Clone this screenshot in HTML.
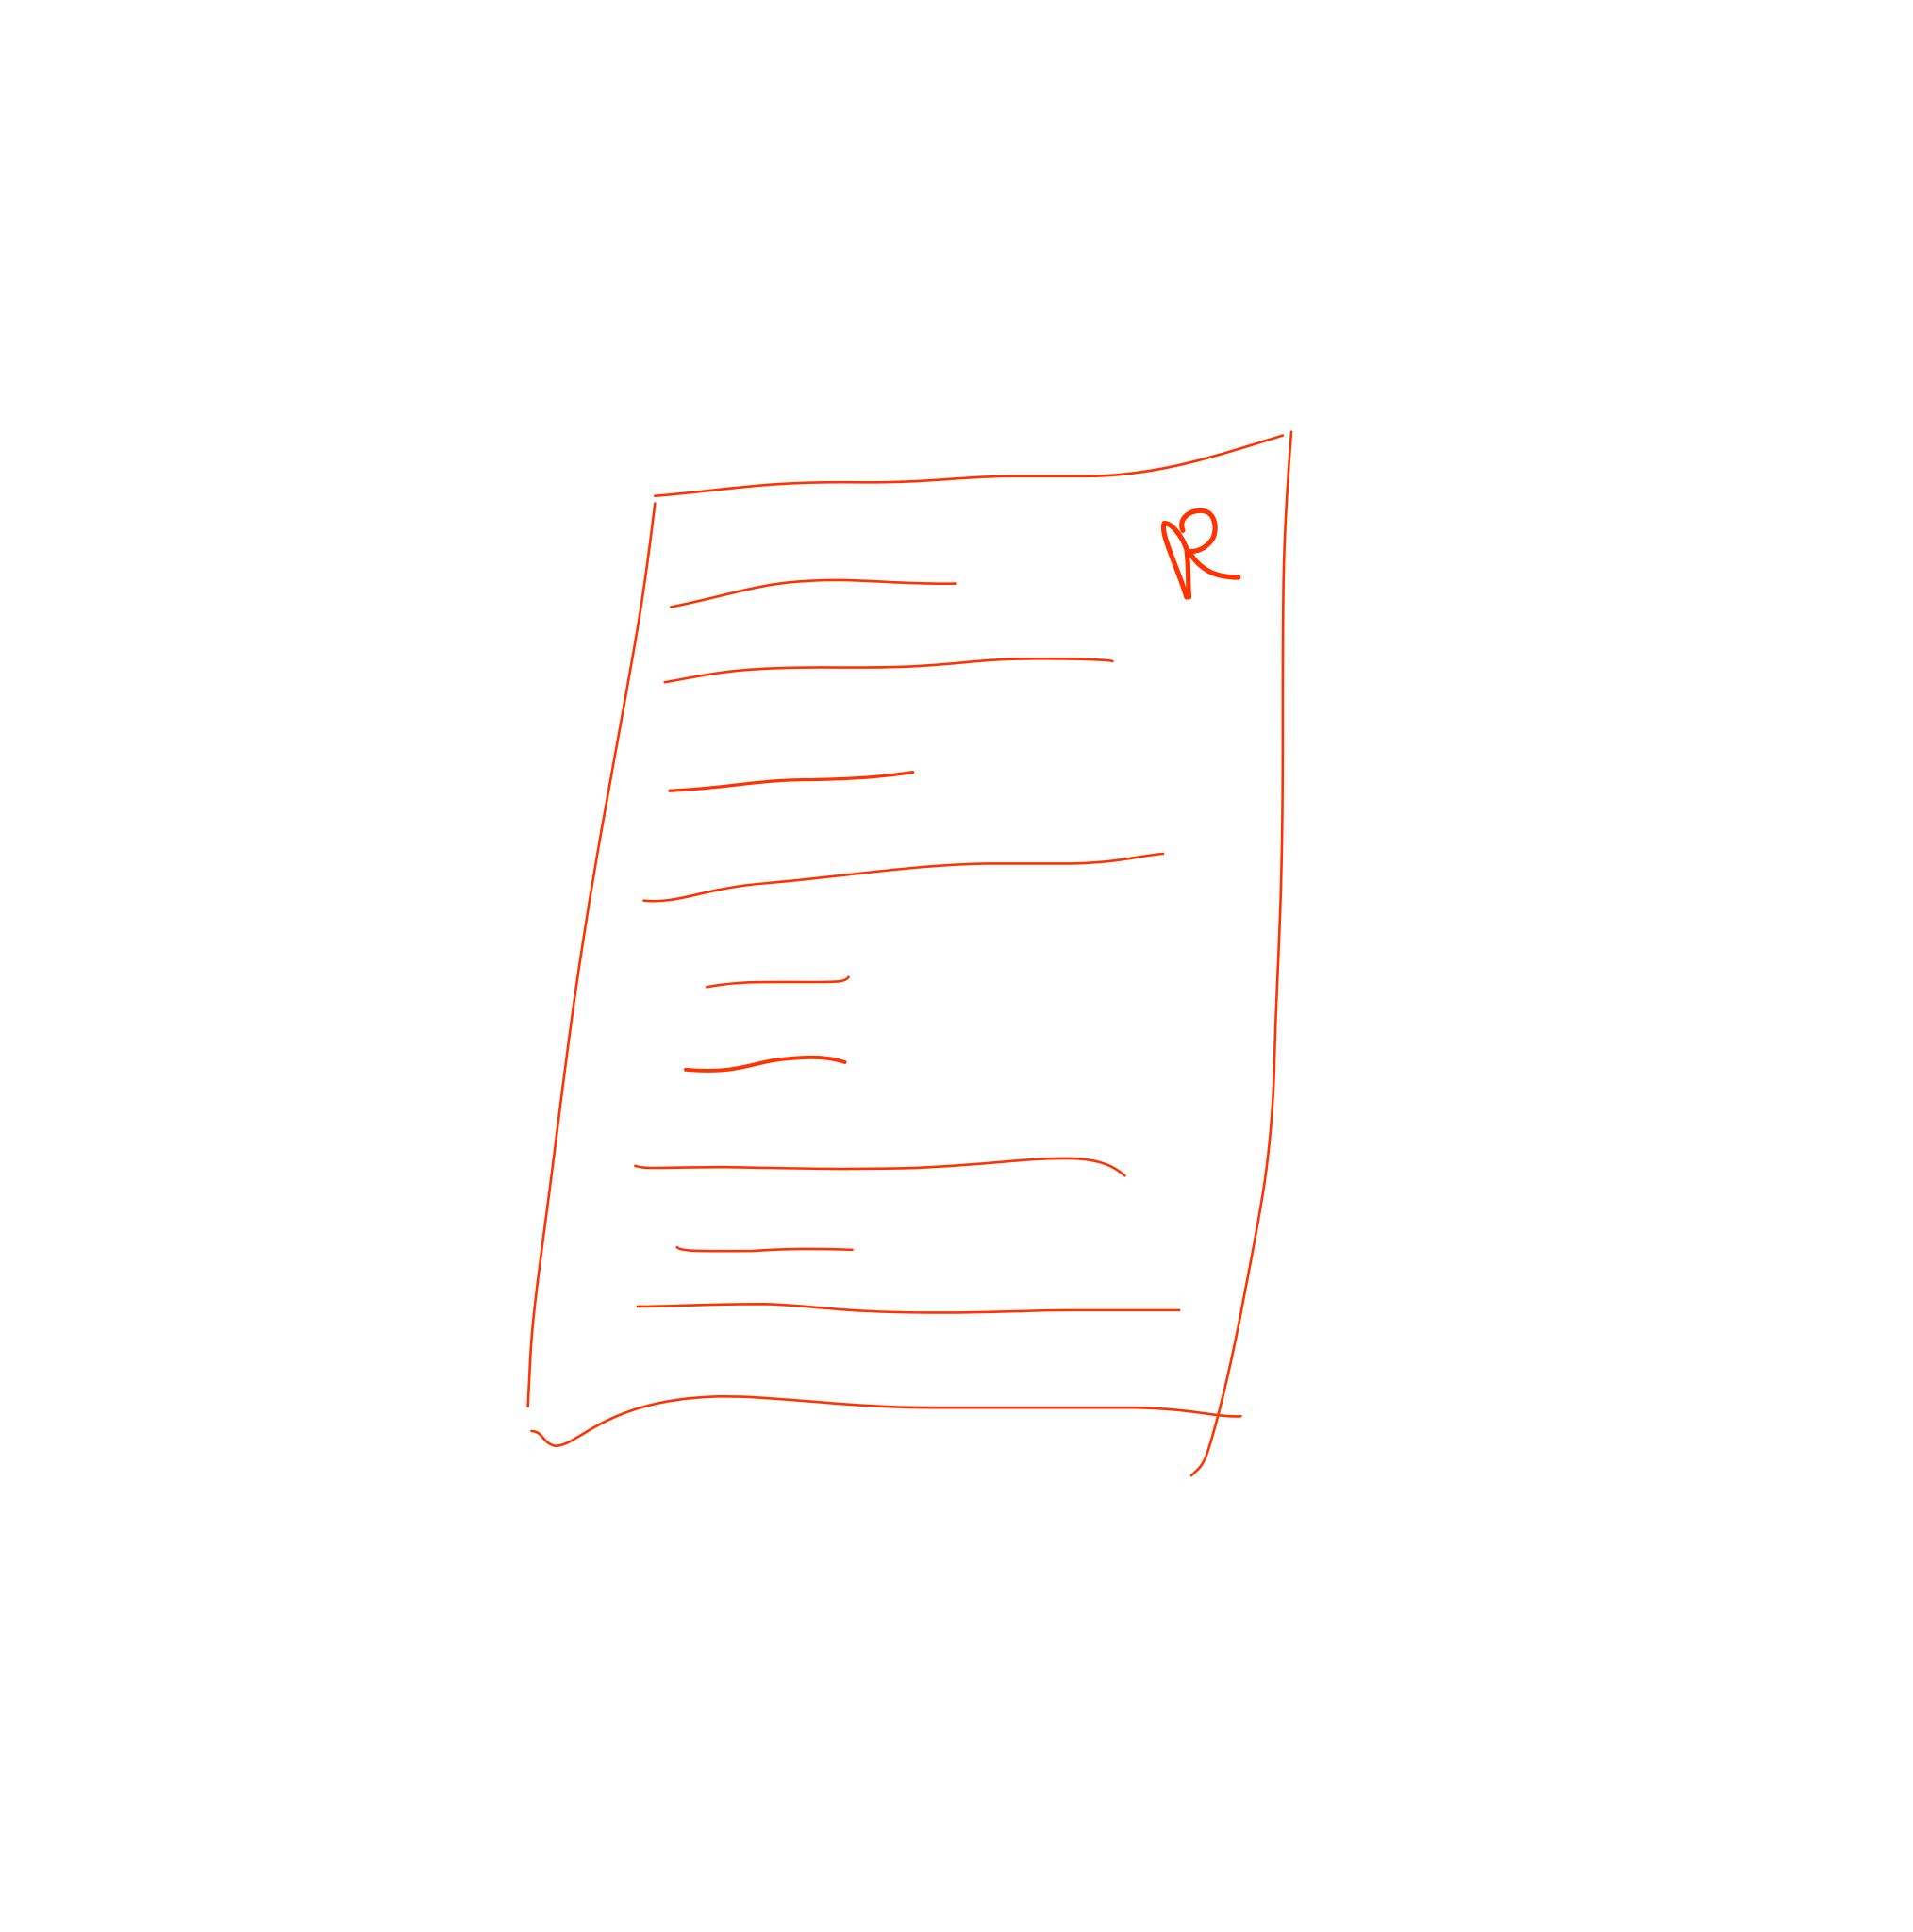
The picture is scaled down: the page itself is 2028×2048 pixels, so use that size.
<!DOCTYPE html>
<html><head><meta charset="utf-8"><style>
html,body{margin:0;padding:0;background:#fff;}
svg{display:block;}
</style></head><body>
<svg width="2028" height="2048" viewBox="0 0 1551 1566" preserveAspectRatio="none" xmlns="http://www.w3.org/2000/svg">
<g fill="none" stroke="#ff3300" stroke-linecap="round" stroke-linejoin="round" stroke-width="2">
<path d="M531 402 C 600 396, 620 390, 700 391 C 760 391, 780 386, 820 386 L 880 386 C 940 386, 990 368, 1040 353"/>
<path d="M1047 350 C 1040 440, 1040 470, 1040 600 C 1040 750, 1035 780, 1033 870 C 1030 950, 1020 990, 1005 1070 C 995 1120, 985 1160, 978 1180 C 974 1190, 970 1192, 966 1196"/>
<path d="M531 408 C 520 500, 515 520, 490 660 C 470 770, 460 850, 450 930 C 440 1010, 432 1060, 430 1100 L 428 1140"/>
<path d="M431 1160 C 440 1160, 440 1170, 450 1172 C 470 1172, 490 1135, 580 1132 C 630 1131, 680 1141, 760 1141 L 920 1141 C 970 1142, 985 1149, 1006 1148"/>
<path d="M544 492 C 580 485, 610 475, 640 472 C 690 467, 720 474, 775 473"/>
<path d="M539 553 C 570 548, 590 540, 680 541 C 780 542, 780 533, 850 534 C 880 534, 900 535, 902 536"/>
<path d="M543 641 C 600 638, 610 632, 660 632 C 700 631, 720 629, 740 626" stroke-width="2.5"/>
<path d="M522 730 C 550 733, 570 720, 620 716 C 680 711, 740 701, 800 700 L 860 700 C 905 700, 920 694, 943 692"/>
<path d="M573 800 C 600 795, 620 796, 660 796 C 680 796, 685 796, 688 792"/>
<path d="M556 867 C 600 871, 610 860, 640 858 C 660 856, 672 857, 685 861" stroke-width="3"/>
<path d="M515 945 C 525 948, 530 946, 590 946 C 650 947, 670 948, 730 947 C 800 945, 830 938, 870 939 C 895 940, 905 947, 912 953"/>
<path d="M549 1011 C 552 1015, 580 1014, 610 1014 C 640 1012, 660 1012, 691 1013"/>
<path d="M517 1059 C 550 1059, 560 1057, 620 1057 C 660 1058, 680 1064, 760 1064 C 820 1064, 830 1062, 870 1062 L 956 1062"/>
<g stroke-width="4">
<path d="M962 484 C 955 460, 940 432, 944 424 C 950 424, 958 434, 962 445 C 964 460, 963 472, 964 484"/>
<path d="M959 430 C 955 420, 965 413, 975 414 C 986 415, 987 430, 983 437 C 978 444, 972 447, 965 447"/>
<path d="M962 444 C 972 462, 985 468, 1004 468"/>
</g>
</g>
</svg>
</body></html>
